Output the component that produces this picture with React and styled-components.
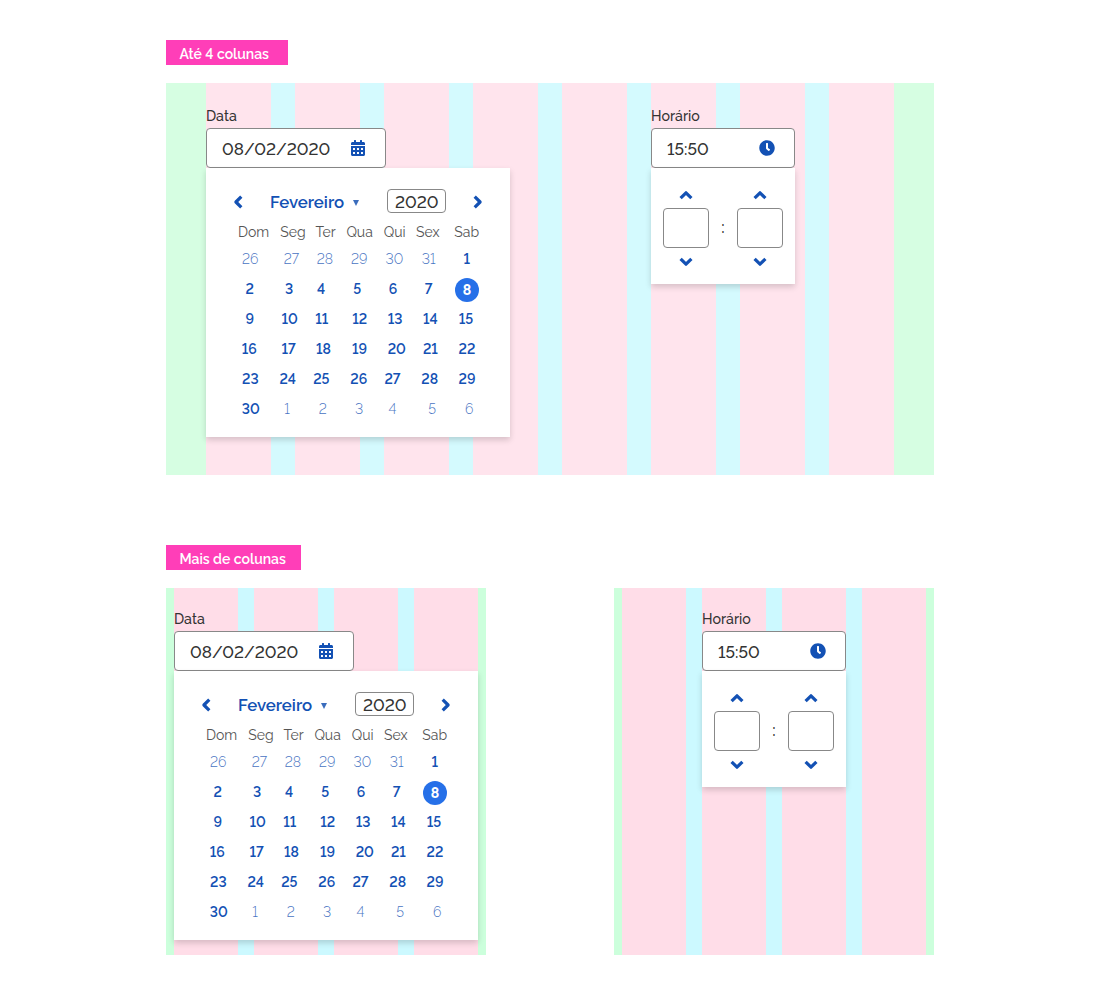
import React from 'react';
import styled, { createGlobalStyle, css } from 'styled-components';
import { FaCalendarAlt, FaClock } from 'react-icons/fa';

const GlobalStyle = createGlobalStyle`
  * { box-sizing: border-box; }
  body {
    margin: 0;
    background: #fff;
    color: #333;
    font-family: Raleway, Lato, "Liberation Sans", sans-serif;
    font-variant-numeric: lining-nums;
  }
  svg { display: block; flex: none; }
`;

const Page = styled.main`
  width: 768px;
  height: 995px;
  margin: 0 auto;
  padding-top: 40px;
`;

const Section = styled.section`
  margin-bottom: 70px;
`;

const Tag = styled.h2`
  width: ${(p) => p.$width}px;
  height: 25px;
  margin: 0 0 18px;
  padding: 2px 0 0 13.4px;
  background: #ff3eb8;
  color: #fff;
  font-size: 14px;
  font-weight: 600;
  line-height: 24px;
  white-space: nowrap;
`;

const Boards = styled.div`
  display: flex;
  justify-content: space-between;
`;

const Board = styled.div`
  width: ${(p) => (p.$wide ? 768 : 320)}px;
  height: ${(p) => (p.$wide ? 392 : 367)}px;
  padding: 0 ${(p) => (p.$wide ? 40 : 8)}px;
  background: ${(p) => (p.$wide ? '#d6fee2' : '#ccffdc')};
`;

const Columns = styled.div`
  display: flex;
  height: 100%;
  padding-top: ${(p) => (p.$wide ? 20 : 18)}px;
  padding-left: ${(p) => p.$indent || 0}px;
  gap: 141px;
  background: ${(p) =>
    p.$wide
      ? 'repeating-linear-gradient(to right, #ffe4ed 0 65px, #d4fafe 65px 89px)'
      : 'repeating-linear-gradient(to right, #ffdde8 0 64px, #ccf9ff 64px 80px)'};
`;

const Field = styled.div`
  width: ${(p) => p.$width}px;
  flex: none;
`;

const Label = styled.label`
  display: block;
  height: 25px;
  padding-top: 1px;
  font-size: 14.2px;
  font-weight: 500;
  line-height: 24px;
`;

const InputBox = styled.div`
  display: flex;
  align-items: center;
  justify-content: space-between;
  width: ${(p) => p.$width}px;
  height: 40px;
  padding: 0 19px 0 15px;
  border: 1px solid #888;
  border-radius: 4px;
  background: #fff;
  color: #1351b4;
`;

const Value = styled.span`
  padding-top: 2px;
  color: #333;
  font-size: 17px;
  font-weight: 500;
  line-height: 24px;
  white-space: nowrap;
`;

const panel = css`
  background: #fff;
  box-shadow: 0 3px 6px rgba(0, 0, 0, 0.16);
`;

const CalendarPanel = styled.div`
  ${panel}
  height: 269px;
  padding-top: 21px;
`;

const CalendarHeader = styled.div`
  display: flex;
  align-items: center;
  height: 24px;
  padding: 0 24px;
  color: #1351b4;

  svg { margin-top: 2px; }
`;

const Month = styled.span`
  width: 74px;
  margin-left: 24px;
  padding-top: 2px;
  font-size: 16.8px;
  font-weight: 600;
  line-height: 24px;
  white-space: nowrap;
`;

const Caret = styled.span`
  width: 0;
  margin: 3px 28px 0 9px;
  border: 3px solid transparent;
  border-top: 6px solid #3a6cbc;
  border-bottom: 0;
`;

const Year = styled.div`
  display: flex;
  align-items: center;
  width: 59px;
  height: 24px;
  margin-right: auto;
  padding-left: 7px;
  border: 1px solid #888;
  border-radius: 4px;
`;

const WeekRow = styled.div`
  display: grid;
  grid-template-columns: 38px 36px 35.5px 36px 35px 36.5px 38px;
  align-items: center;
  height: ${(p) => (p.$head ? 31 : 30)}px;
  padding-left: 25px;
  padding-top: ${(p) => (p.$head ? 7 : 0)}px;
  text-align: center;
  font-size: 14px;
  line-height: 24px;
`;

const WeekDay = styled.span`
  color: #555;
  font-weight: 400;
  text-indent: ${(p) => p.$shift * 2 - 0.6}px;
  white-space: nowrap;
`;

const Day = styled.span`
  color: #1351b4;
  opacity: ${(p) => (p.$muted ? 0.8 : 1)};
  font-weight: ${(p) => (p.$muted ? 300 : 600)};
  text-indent: ${(p) => p.$shift * 2}px;
  white-space: nowrap;
`;

const SelectedDay = styled.span`
  justify-self: center;
  width: 24px;
  height: 24px;
  margin-top: 2px;
  border-radius: 50%;
  background: #2670e8;
  color: #fff;
  font-weight: 700;
`;

const TimePanel = styled.div`
  ${panel}
  display: flex;
  justify-content: space-between;
  height: 116px;
  padding: 19px 12px 0;
`;

const Stepper = styled.div`
  display: flex;
  flex-direction: column;
  align-items: center;
  width: 46px;
  color: #1351b4;
`;

const StepValue = styled.div`
  width: 46px;
  height: 40px;
  margin: 5px 0 6px;
  border: 1px solid #888;
  border-radius: 4px;
`;

const Colon = styled.span`
  padding-top: 28px;
  font-size: 16.8px;
  font-weight: 500;
  line-height: 24px;
`;

const WEEK_DAYS = [
  ['Dom', 3.8], ['Seg', 5.9], ['Ter', 3.2], ['Qua', 1.4], ['Qui', 0.9], ['Sex', -1.6], ['Sab', 0],
];

const WEEKS = [
  [[26, 0.3], [27, 4.3], [28, 2.2], [29, 0.8], [30, 0.4], [31, -1.2], [1, -0.3]],
  [[2, -0.3], [3, 2.2], [4, -1.6], [5, -1.3], [6, -1.1], [7, -1.2], [8, 0]],
  [[9, -0.3], [10, 2.7], [11, -1], [12, 1.2], [13, 1.2], [14, 0.7], [15, -1]],
  [[16, -0.7], [17, 1.5], [18, 0.6], [19, 0.9], [20, 2.7], [21, 0.7], [22, 0]],
  [[23, 0.3], [24, 0.7], [25, -1.4], [26, 0.2], [27, -1.5], [28, 0], [29, 0]],
  [[30, 0.8], [1, 0], [2, 0], [3, 0.7], [4, -1.5], [5, 2.4], [6, 2.2]],
];

const isOutside = (week, day) => (week === 0 && day > 20) || (week === 5 && day < 10);

const CHEVRONS = {
  left: 'M11.3 2.6 5.9 8l5.4 5.4',
  right: 'M4.7 2.6 10.1 8l-5.4 5.4',
  up: 'M2.6 11.2 8 5.8l5.4 5.4',
  down: 'M2.6 4.8 8 10.2l5.4-5.4',
};

function Chevron({ to }) {
  return (
    <svg width="16" height="16" viewBox="0 0 16 16" fill="none">
      <path d={CHEVRONS[to]} stroke="currentColor" strokeWidth="3.2" strokeLinejoin="round" />
    </svg>
  );
}

function DateField() {
  return (
    <Field $width={304}>
      <Label>Data</Label>
      <InputBox $width={180}>
        <Value>08/02/2020</Value>
        <FaCalendarAlt size={16} />
      </InputBox>
      <CalendarPanel>
        <CalendarHeader>
          <Chevron to="left" />
          <Month>Fevereiro</Month>
          <Caret />
          <Year><Value>2020</Value></Year>
          <Chevron to="right" />
        </CalendarHeader>
        <WeekRow $head>
          {WEEK_DAYS.map(([name, shift]) => (
            <WeekDay key={name} $shift={shift}>{name}</WeekDay>
          ))}
        </WeekRow>
        {WEEKS.map((week, w) => (
          <WeekRow key={w}>
            {week.map(([day, shift]) =>
              w === 1 && day === 8 ? (
                <SelectedDay key={day}>{day}</SelectedDay>
              ) : (
                <Day key={day} $shift={shift} $muted={isOutside(w, day)}>{day}</Day>
              ),
            )}
          </WeekRow>
        ))}
      </CalendarPanel>
    </Field>
  );
}

function TimeStepper() {
  return (
    <Stepper>
      <Chevron to="up" />
      <StepValue />
      <Chevron to="down" />
    </Stepper>
  );
}

function TimeField() {
  return (
    <Field $width={144}>
      <Label>Horário</Label>
      <InputBox $width={144}>
        <Value>15:50</Value>
        <FaClock size={16} />
      </InputBox>
      <TimePanel>
        <TimeStepper />
        <Colon>:</Colon>
        <TimeStepper />
      </TimePanel>
    </Field>
  );
}

export default function App() {
  return (
    <>
      <GlobalStyle />
      <Page>
        <Section>
          <Tag $width={122}>Até 4 colunas</Tag>
          <Board $wide>
            <Columns $wide>
              <DateField />
              <TimeField />
            </Columns>
          </Board>
        </Section>
        <Section>
          <Tag $width={135}>Mais de colunas</Tag>
          <Boards>
            <Board>
              <Columns><DateField /></Columns>
            </Board>
            <Board>
              <Columns $indent={80}><TimeField /></Columns>
            </Board>
          </Boards>
        </Section>
      </Page>
    </>
  );
}
